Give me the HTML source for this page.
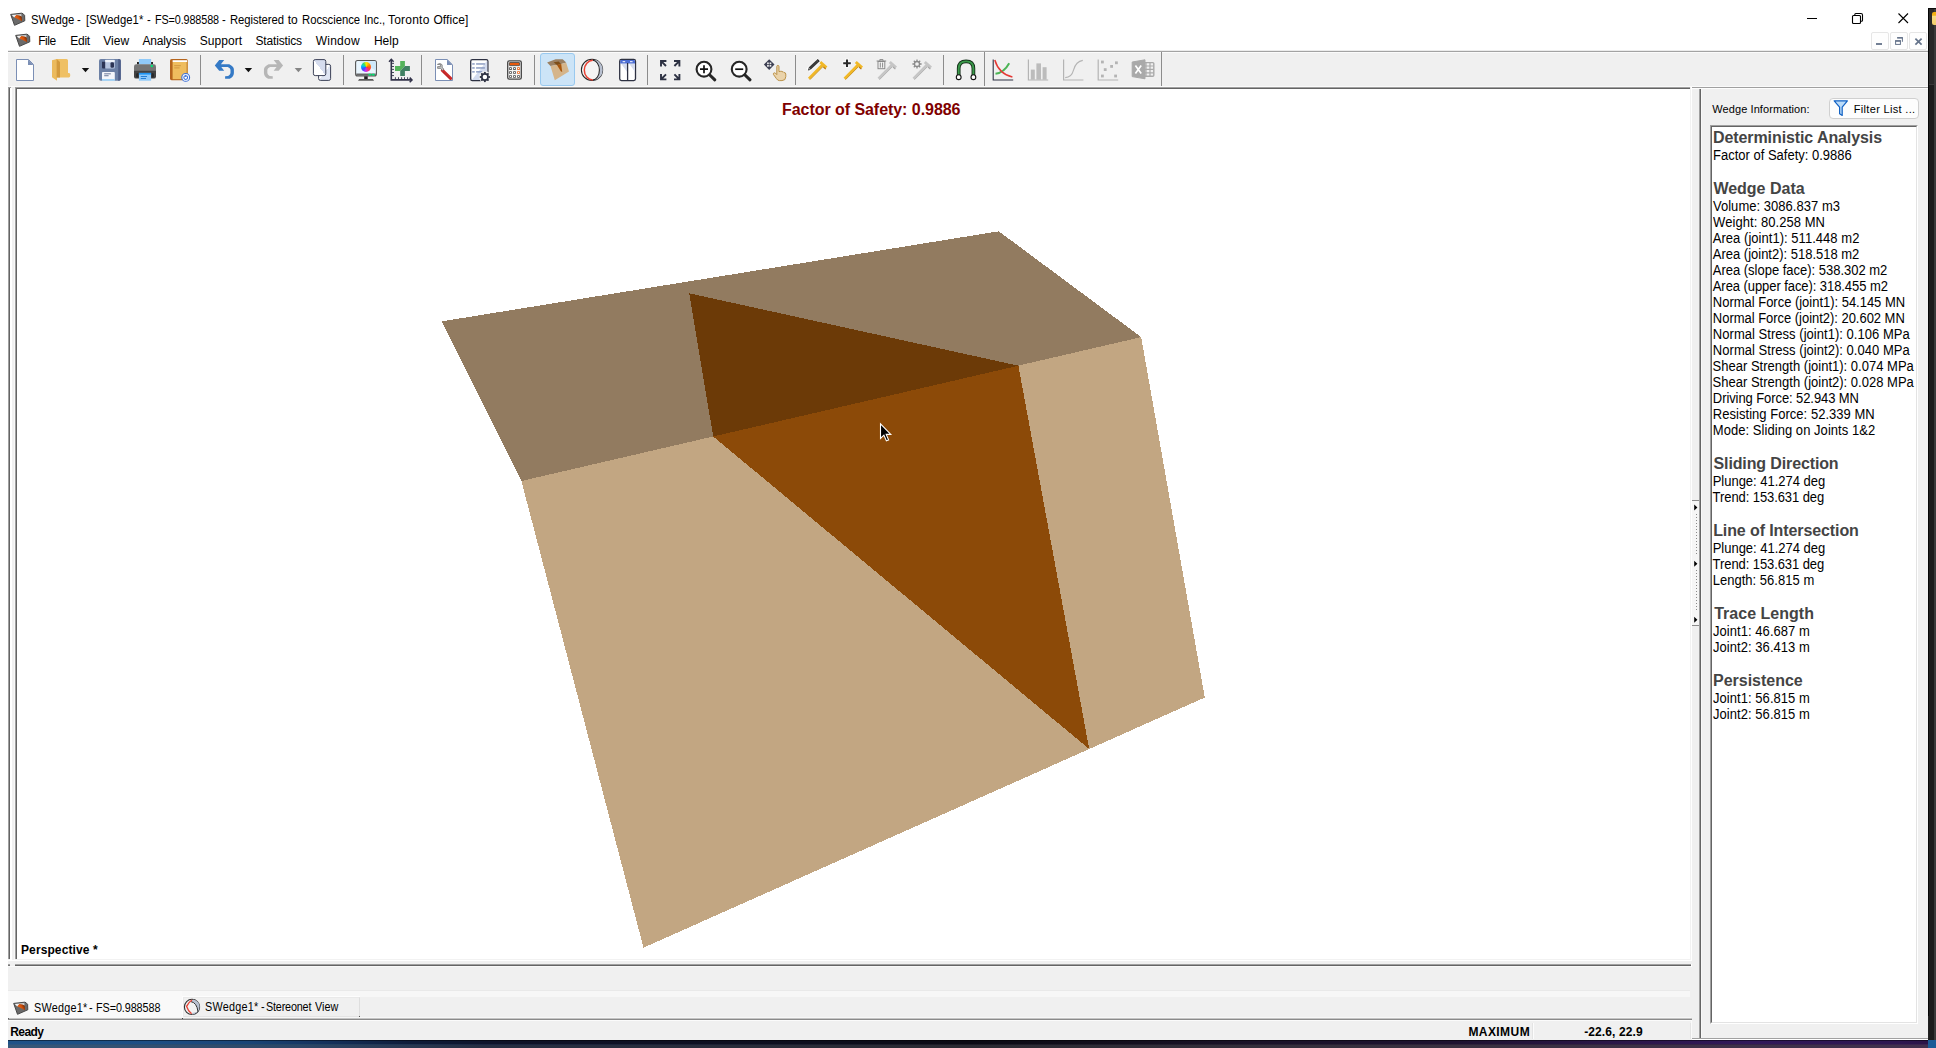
<!DOCTYPE html>
<html>
<head>
<meta charset="utf-8">
<title>SWedge</title>
<style>
*{box-sizing:border-box;margin:0;padding:0}
html,body{width:1936px;height:1048px;overflow:hidden;background:#fff;font-family:"Liberation Sans",sans-serif;}
#root{position:absolute;left:0;top:0;width:1936px;height:1048px;overflow:hidden;background:#fff}
.abs{position:absolute}
.t{position:absolute;white-space:nowrap;color:#000;line-height:1}
#win{position:absolute;left:8px;top:0;width:1920px;height:1040px;background:#f0f0f0}
#titlebar{position:absolute;left:0;top:0;width:1920px;height:50px;background:#fff}
.menu{font-size:12px;top:35px}
.sep{position:absolute;top:54px;width:1px;height:30px;background:#a0a0a0}
.ic{position:absolute;top:58px;width:24px;height:24px;overflow:visible}
svg{overflow:visible}
/* info panel */
#infoo{position:absolute;left:1702px;top:125px;width:208px;height:899px;border:1px solid;border-color:#a0a0a0 #fff #fff #a0a0a0}
#info{position:absolute;left:0;top:0;width:206px;height:897px;background:#fff;border:1px solid;border-color:#646464 #e3e3e3 #e3e3e3 #646464;padding-top:1px}
#info .h{font-weight:bold;font-size:16px;color:#444;height:19px;line-height:19px;white-space:nowrap;padding-left:1px;letter-spacing:-0.12px}
#info .l{font-size:13px;color:#000;height:16px;line-height:16px;white-space:nowrap;padding-left:1px;position:relative;top:1px;transform:scaleY(1.08);transform-origin:0 12.5px}
#info .b{height:16px}
</style>
</head>
<body>
<div id="root">
<svg width="0" height="0" style="position:absolute">
 <defs>
  <linearGradient id="og" x1="0" y1="0.6" x2="1" y2="0.2"><stop offset="0.15" stop-color="#f06010"/><stop offset="0.55" stop-color="#d0500a"/><stop offset="0.9" stop-color="#7a2c02"/></linearGradient>
  <linearGradient id="wg" x1="0" y1="0" x2="1" y2="0"><stop offset="0" stop-color="#ffffff"/><stop offset="1" stop-color="#c8c8c8"/></linearGradient>
  <symbol id="appicon" viewBox="0 0 16 14">
   <path d="M0.7 2.4 L11.6 1.2 Q13 1.1 14.6 3.4 L14.8 8.8 L4.5 13.3 Z" fill="#6a6a6a" stroke="#474747" stroke-width="1" stroke-linejoin="round"/>
   <path d="M1.8 3 L11.3 2 L11.6 4.8 L6.6 3.2 L4.2 5.6 Z" fill="url(#wg)"/>
   <path d="M4.4 5.2 L6.4 3.1 Q9.6 3.2 11.6 4.6 L12.1 9.3 Z" fill="url(#og)"/>
  </symbol>
 </defs>
</svg>
<!-- desktop strips -->
<div class="abs" id="wall" style="left:8px;top:1040px;width:1920px;height:8px;background:linear-gradient(90deg,#1f5288 0px,#1d4e84 142px,#1a4476 242px,#14305a 322px,#0e1c3a 400px,#0e1228 500px,#0c0e1e 792px,#0a0a14 960px,#120e1c 1092px,#1a1228 1242px,#1e1230 1444px,#2a1646 1592px,#32185a 1742px,#2e1650 1892px,#2a1448 1920px)"></div>
<div class="abs" id="wall2" style="left:8px;top:1045px;width:1920px;height:3px;background:linear-gradient(90deg,#37587a 0px,#2c4666 292px,#262e42 476px,#2a2a32 960px,#3a3040 1444px,#42304e 1920px)"></div>
<div class="abs" style="left:8px;top:1044px;width:1920px;height:1px;background:linear-gradient(90deg,#2b5581 0px,#234566 292px,#1a2540 476px,#1a1a24 960px,#2e2238 1444px,#3a2350 1920px)"></div>
<div class="abs" style="left:8px;top:1040px;width:1920px;height:1px;background:rgba(0,0,0,0.45)"></div>
<div class="abs" id="rstrip" style="left:1928px;top:8px;width:8px;height:1032px;background:#1d1d1d"></div>
<div class="abs" style="left:1928px;top:8px;width:8px;height:76px;background:#292929"></div>
<div class="abs" style="left:1928px;top:84px;width:8px;height:1px;background:#3a3a3a"></div>
<div class="abs" style="left:1934px;top:8px;width:2px;height:1032px;background:#3b3b3b"></div>
<div class="abs" style="left:1928px;top:8px;width:1px;height:1008px;background:#050505"></div>
<div class="abs" style="left:1928px;top:1016px;width:1px;height:24px;background:#222"></div>
<div class="abs" style="left:1928px;top:8px;width:8px;height:1px;background:#0a0a0a"></div>
<div class="abs" style="left:1932px;top:12px;width:4px;height:13px;background:linear-gradient(180deg,#f2ae0a 0,#f2b21a 25%,#f7dc86 32%,#f3cf6a 100%);border-radius:2px 0 0 2px"></div>
<div class="abs" style="left:1928px;top:1040px;width:8px;height:8px;background:#1b5b97"></div>

<div id="win">
 <div id="titlebar"></div>
 <svg class="abs" style="left:2px;top:12px" width="16" height="14"><use href="#appicon"/></svg>
 <svg class="abs" style="left:7px;top:33px" width="16" height="14"><use href="#appicon"/></svg>
 <!-- title text -->
 <!-- menu -->
 <!-- window controls -->
 <svg class="abs" style="left:1792px;top:8px" width="120" height="20" viewBox="0 0 120 20">
  <path d="M7 10.5 H17" stroke="#000" stroke-width="1" fill="none"/>
  <path d="M53.5 7.5 h6 q1 0 1 1 v6 q0 1 -1 1 h-6 q-1 0 -1 -1 v-6 q0 -1 1 -1 z M54.8 7.2 v-0.7 q0 -1 1 -1 h5.2 q1.5 0 1.5 1.5 v5.2 q0 1 -1 1 h-0.7" stroke="#000" stroke-width="1.1" fill="none"/>
  <path d="M98.5 5.5 L108 15 M108 5.5 L98.5 15" stroke="#000" stroke-width="1.1" fill="none"/>
 </svg>
 <!-- MDI controls -->
 <div class="abs" style="left:1863px;top:32px;width:18px;height:18px;border:1px solid #e6e6e6;border-radius:2px;background:#fefefe"></div>
 <div class="abs" style="left:1882px;top:32px;width:18px;height:18px;border:1px solid #e6e6e6;border-radius:2px;background:#fefefe"></div>
 <div class="abs" style="left:1901px;top:32px;width:18px;height:18px;border:1px solid #e6e6e6;border-radius:2px;background:#fefefe"></div>
 <svg class="abs" style="left:1863px;top:32px" width="56" height="18" viewBox="1871 32 56 18">
  <rect x="1876" y="43.1" width="6" height="1.8" fill="#64738a"/>
  <path d="M1897.2 37.8 H1902.4 V41.8" stroke="#64738a" stroke-width="1" fill="none"/>
  <rect x="1897.2" y="37.1" width="5.7" height="1.4" fill="#64738a"/>
  <rect x="1895.6" y="40.9" width="4.8" height="3.5" fill="#fff" stroke="#64738a" stroke-width="1"/>
  <rect x="1895.1" y="40.2" width="5.8" height="1.5" fill="#64738a"/>
  <path d="M1915.4 38.6 L1921.6 44.6 M1921.6 38.6 L1915.4 44.6" stroke="#64738a" stroke-width="1.7" fill="none"/>
 </svg>
 <!-- line under menu -->
 <div class="abs" style="left:0;top:50px;width:1920px;height:1px;background:#ececec"></div>
 <div class="abs" style="left:0;top:51px;width:1920px;height:1px;background:#a3a3a3"></div>
 <div class="abs" style="left:0;top:52px;width:1919px;height:1px;background:#fbfbfb"></div>
 <!-- TOOLBAR -->
 <svg class="abs" id="tb" style="left:-8px;top:52px" width="1200" height="35" viewBox="0 52 1200 35">
  <defs>
   <linearGradient id="pg" x1="0" y1="0" x2="1" y2="1"><stop offset="0.5" stop-color="#ffffff"/><stop offset="0.5" stop-color="#dfe5f3"/></linearGradient>
   <linearGradient id="pg2" x1="1" y1="0" x2="0" y2="1"><stop offset="0.5" stop-color="#d5dcee"/><stop offset="0.5" stop-color="#ffffff"/></linearGradient>
   <g id="hammer">
    <path d="M0.9 18.6 L14.6 4.8" stroke="#f1b827" stroke-width="2.7" fill="none"/>
    <path d="M1.9 19.7 L15.2 6.3" stroke="#c98e12" stroke-width="0.9" fill="none"/>
    <path d="M12.2 2.0 L18.4 7.6" stroke="#f1b827" stroke-width="2.9" fill="none"/>
    <path d="M15.4 7.0 L17.8 9.1" stroke="#b97a10" stroke-width="1.2" fill="none"/>
   </g>
   <g id="hammerg">
    <path d="M0.9 18.6 L14.6 4.8" stroke="#c6c6c6" stroke-width="2.7" fill="none"/>
    <path d="M1.9 19.7 L15.2 6.3" stroke="#adadad" stroke-width="0.9" fill="none"/>
    <path d="M12.2 2.0 L18.4 7.6" stroke="#c6c6c6" stroke-width="2.9" fill="none"/>
    <path d="M15.4 7.0 L17.8 9.1" stroke="#a8a8a8" stroke-width="1.2" fill="none"/>
   </g>
   <g id="dd"><path d="M0 0 h7.4 l-3.7 4.2 z"/></g>
   <path id="undoP" d="M214.8 65.5 L219.2 60.1 H224.2 L220.9 64.3 H229.3 Q233.9 66.5 233.9 69.6 V73.3 Q233.6 77 229.7 78.8 H225.1 V76.3 L228.2 76 Q230.5 74.5 230.5 72.9 V69.8 Q230.3 68 227.8 67 H221.3 L224.2 70.8 H219.2 Z"/>
  </defs>
  <!-- 1 new -->
  <path d="M16.5 59.5 H28.5 L33.5 64.5 V80.5 H16.5 Z" fill="#fff" stroke="#7b8fb5" stroke-width="1"/>
  <path d="M28 59.5 V65 H33.5 Z" fill="#7b8fb5"/>
  <!-- 2 open folder -->
  <path d="M52 60.2 L57 59 V80.8 L52 77.2 Z" fill="#ebba5e"/>
  <path d="M56.6 59 H66.5 Q68 59 68 60.5 V73 H69 Q70.2 73 70.2 74.6 V75.8 Q70.2 77.4 68.8 77.4 H56.6 Z" fill="#efc064"/>
  <path d="M56.6 59 L60 62 V77.4 H56.6 Z" fill="#d39a3e"/>
  <use href="#dd" x="81.8" y="68" fill="#111"/>
  <!-- 4 save -->
  <rect x="99" y="59" width="21.8" height="21.8" rx="1.8" fill="#6c80a5"/>
  <path d="M118.2 59 H119 Q120.8 59 120.8 60.8 V79 Q120.8 80.8 119 80.8 H118.2 Z" fill="#4e5e88"/>
  <rect x="105" y="59.8" width="9.8" height="8.8" rx="0.8" fill="#b7c5df"/>
  <rect x="105.2" y="60" width="9.4" height="2.2" fill="#eef2f9"/>
  <path d="M102 61.8 H105.2 V68.4 H103 Q102 68.4 102 67.4 Z" fill="#2c3454"/>
  <rect x="110.5" y="62.3" width="3.5" height="5.4" rx="1.2" fill="#2c3454"/>
  <rect x="102" y="72.1" width="12.8" height="8.7" rx="0.8" fill="#f4f6fb"/>
  <rect x="104.2" y="73.4" width="6.6" height="0.9" fill="#5b6b8f"/>
  <rect x="104.2" y="75.3" width="4.4" height="0.9" fill="#5b6b8f"/>
  <rect x="102" y="79.1" width="12.8" height="1.7" fill="#9cd0f5"/>
  <!-- 5 print -->
  <rect x="138.9" y="59" width="12.2" height="5.4" fill="#90caf9"/>
  <rect x="137" y="62" width="1.9" height="2.4" fill="#222"/><rect x="151.1" y="62" width="1.9" height="2.4" fill="#222"/>
  <path d="M136.2 64.2 H153.8 Q156 64.2 156 66.4 V70.8 H134 V66.4 Q134 64.2 136.2 64.2 Z" fill="#757575"/>
  <path d="M134 70.6 H156 V76.4 Q156 78.6 153.8 78.6 H136.2 Q134 78.6 134 76.4 Z" fill="#424242"/>
  <rect x="136" y="72.9" width="18" height="4.6" rx="1.6" fill="#2a2a2a"/>
  <rect x="138.9" y="72.9" width="12.2" height="7.8" fill="#90caf9"/>
  <rect x="138.9" y="72.9" width="12.2" height="1.7" fill="#2196f3"/>
  <rect x="140.8" y="76.1" width="6.2" height="0.9" fill="#1976d2"/><rect x="140.8" y="78" width="5.2" height="0.9" fill="#1976d2"/>
  <circle cx="151.8" cy="66" r="1.2" fill="#00e676"/>
  <!-- 6 book -->
  <rect x="170" y="59" width="17.8" height="21.2" rx="1.6" fill="#b5651d"/>
  <rect x="172.6" y="60.2" width="14.6" height="1.8" fill="#fff"/>
  <rect x="172.6" y="62" width="15.2" height="17.2" fill="#efbd5e"/>
  <rect x="186.5" y="62" width="1.3" height="17.2" fill="#c98a3a"/><rect x="174.2" y="65.2" width="6.6" height="1" fill="#d19640"/><rect x="174.2" y="67.4" width="5.4" height="1" fill="#d19640"/>
  <circle cx="185.7" cy="77.4" r="3.9" fill="#fff" stroke="#3b6fd6" stroke-width="1.1"/>
  <circle cx="185.7" cy="77.6" r="1.9" fill="none" stroke="#3b6fd6" stroke-width="1.1"/>
  <rect x="185.2" y="74.8" width="1" height="2.2" fill="#3b6fd6"/>
  <rect x="200" y="55" width="1" height="30" fill="#8c8c8c"/>
  <!-- 7 undo -->
  <use href="#undoP" fill="#357ac6"/>
  <use href="#dd" x="244.7" y="68" fill="#111"/>
  <!-- 8 redo -->
  <use href="#undoP" transform="translate(497.85 0) scale(-1 1)" fill="#b6b6b6"/>
  <use href="#dd" x="294.7" y="68" fill="#858585"/>
  <!-- 9 copy -->
  <rect x="318.6" y="64.4" width="12" height="16" rx="1.8" fill="url(#pg)" stroke="#3c4258" stroke-width="1"/>
  <rect x="313.4" y="59.6" width="12.4" height="16" rx="1.8" fill="url(#pg2)" stroke="#3c4258" stroke-width="1"/>
  <rect x="343" y="55" width="1" height="30" fill="#8c8c8c"/>
  <!-- 10 monitor -->
  <rect x="355.6" y="60.5" width="20.8" height="15.4" rx="2" fill="#eaf6fe" stroke="#555" stroke-width="1.1"/>
  <path d="M359 61.2 H374.6 Q375.8 61.2 375.8 62.4 V70.6 Z" fill="#cfe8fa"/>
  <path d="M356.2 73.6 H375.8 V74.2 Q375.8 75.4 374.6 75.4 H357.4 Q356.2 75.4 356.2 74.2 Z" fill="#686868"/>
  <rect x="368.4" y="73.7" width="2.9" height="1.8" rx="0.6" fill="#00e070"/><rect x="371.8" y="73.7" width="2.9" height="1.8" rx="0.6" fill="#00e070"/>
  <rect x="364.2" y="76.3" width="3.5" height="2.9" fill="#1e1e1e"/>
  <path d="M359.2 79.1 H372.9 L374.1 80.7 H358 Z" fill="#5a5a5a"/>
  <!-- 11 axes plus -->
  <path d="M391.3 59.8 V79.9 H411.6" fill="none" stroke="#33334a" stroke-width="1.6"/>
  <path d="M389 61.7 L391.3 59.3 L393.6 61.7 M409.7 77.6 L412 79.9 L409.7 82.2" fill="none" stroke="#33334a" stroke-width="1.5"/>
  <path d="M392 63.4 h2 M392 66.5 h2 M392 69.4 h2 M392 72.5 h2 M392 75.6 h2 M395.4 79.2 v-2 M398.5 79.2 v-2 M401.6 79.2 v-2 M404.5 79.2 v-2 M407.6 79.2 v-2" stroke="#33334a" stroke-width="0.9"/>
  <path d="M400.2 61.1 H404.9 V66.05 L400.2 71 H395 V66.05 H400.2 Z" fill="#53b35a"/>
  <path d="M404.9 66.05 H409.9 V71 H404.9 V76 H400.2 V71 Z" fill="#3f8062"/>
  <rect x="421" y="55" width="1" height="30" fill="#8c8c8c"/>
  <!-- 12 wrench doc -->
  <path d="M435.5 59.5 H447.2 L452.5 64.8 V80.5 H435.5 Z" fill="#fff" stroke="#7b8fb5" stroke-width="1"/>
  <path d="M447 59.5 V65 H452.5 Z" fill="#7b8fb5"/>
  <path d="M442.4 70.4 L450.6 78.4" stroke="#cc2a2a" stroke-width="3.2" stroke-linecap="round" fill="none"/>
  <path d="M443.4 72.4 L449.8 78.6" stroke="#9c1c1c" stroke-width="0.9" stroke-dasharray="0.8 0.8" fill="none"/>
  <path d="M437.4 64.4 H440.4 V66.6 H437.6 V68.4 H440.6 L442.4 70.6 L443.8 69.2 L442.2 67.2 V65.2 Q441.8 63.6 439.6 63.6 Z" fill="#c4c4c4" stroke="#6a6a6a" stroke-width="0.7"/>
  <!-- 13 doc gear -->
  <rect x="470.7" y="59.6" width="17.2" height="21" rx="1.6" fill="#fff" stroke="#2d3142" stroke-width="1.3"/>
  <path d="M487.2 60.4 V79.9 H471.8 Z" fill="#d3dbee"/>
  <g fill="#8d9dc2"><rect x="472.2" y="63.2" width="2.5" height="1.5"/><rect x="476.1" y="63.2" width="8.8" height="1.5"/><rect x="472.2" y="67.2" width="2.5" height="1.5"/><rect x="476.1" y="67.2" width="8.8" height="1.5"/><rect x="472.2" y="71.1" width="2.5" height="1.5"/><rect x="476.1" y="71.1" width="6.2" height="1.5"/></g>
  <circle cx="484.9" cy="77" r="5.9" fill="#f0f0f0"/>
  <g fill="#2d3142"><circle cx="489.15" cy="77.00" r="1.0"/><circle cx="487.91" cy="80.01" r="1.0"/><circle cx="484.90" cy="81.25" r="1.0"/><circle cx="481.89" cy="80.01" r="1.0"/><circle cx="480.65" cy="77.00" r="1.0"/><circle cx="481.89" cy="73.99" r="1.0"/><circle cx="484.90" cy="72.75" r="1.0"/><circle cx="487.91" cy="73.99" r="1.0"/></g>
  <circle cx="484.9" cy="77" r="3.1" fill="#fff" stroke="#2d3142" stroke-width="1.7"/>
  <!-- 14 calculator -->
  <rect x="507.7" y="60.8" width="13.6" height="18.4" rx="1.6" fill="#f4f4f4" stroke="#444" stroke-width="1.3"/>
  <rect x="509.4" y="62.5" width="10.2" height="3.1" rx="0.5" fill="#e8590c" stroke="#444" stroke-width="0.8"/>
  <rect x="509.2" y="67.3" width="2.6" height="2.6" rx="0.4" fill="#444"/><rect x="509.95" y="68.05" width="1.1" height="1.1" fill="#fff"/><rect x="513.2" y="67.3" width="2.6" height="2.6" rx="0.4" fill="#444"/><rect x="513.95" y="68.05" width="1.1" height="1.1" fill="#fff"/><rect x="517.2" y="67.3" width="2.6" height="2.6" rx="0.4" fill="#e8590c"/><rect x="517.95" y="68.05" width="1.1" height="1.1" fill="#fff"/><rect x="509.2" y="71.2" width="2.6" height="2.6" rx="0.4" fill="#444"/><rect x="509.95" y="71.95" width="1.1" height="1.1" fill="#fff"/><rect x="513.2" y="71.2" width="2.6" height="2.6" rx="0.4" fill="#444"/><rect x="513.95" y="71.95" width="1.1" height="1.1" fill="#fff"/><rect x="517.2" y="71.2" width="2.6" height="2.6" rx="0.4" fill="#e8590c"/><rect x="517.95" y="71.95" width="1.1" height="1.1" fill="#fff"/><rect x="509.2" y="75.2" width="2.6" height="2.6" rx="0.4" fill="#444"/><rect x="509.95" y="75.95" width="1.1" height="1.1" fill="#fff"/><rect x="513.2" y="75.2" width="2.6" height="2.6" rx="0.4" fill="#444"/><rect x="513.95" y="75.95" width="1.1" height="1.1" fill="#fff"/><rect x="517.2" y="75.2" width="2.6" height="2.6" rx="0.4" fill="#444"/><rect x="517.95" y="75.95" width="1.1" height="1.1" fill="#fff"/>
  <rect x="534" y="55" width="1" height="30" fill="#8c8c8c"/>
  <!-- 15 wedge selected -->
  <rect x="540.5" y="53.5" width="34" height="32" rx="2.5" fill="#cce4f7" stroke="#99c9ef" stroke-width="1"/>
  <path d="M547.1 62.5 L555.6 59.2 L562.7 59.2 L566.2 62.6 L559.9 64.4 L550.5 66 Z" fill="#9b8062"/>
  <path d="M550.5 65.9 L559.9 64.2 L566.2 62.8 L569 71.6 L554.8 80.2 Z" fill="#d5b58b"/>
  <path d="M553.6 62.2 L558.7 61.6 L561.2 64.2 L557 64.9 Z" fill="#7d4d18"/>
  <path d="M557 64.9 L561.2 64.1 L562.2 72 L560.8 71.2 Z" fill="#a8560c"/>
  <!-- 16 stereonet -->
  <circle cx="592" cy="69.9" r="10.6" fill="#f4f4f4" stroke="#262626" stroke-width="1.05"/>
  <path d="M592.8 60.3 A6.6 9.8 0 0 1 592.8 79.9 L594.6 80.2 A10.6 10.6 0 0 0 595.4 59.8 Z" fill="#b8c0d0"/>
  <path d="M592.8 60.3 A6.6 9.8 0 0 1 592.8 79.9" fill="none" stroke="#262626" stroke-width="1.05"/>
  <path d="M592.8 60.3 A8.5 9.8 0 0 0 592.8 79.9" fill="none" stroke="#e94335" stroke-width="1.5"/>
  <!-- 17 columns -->
  <rect x="619.7" y="59.4" width="15.8" height="21.2" rx="1.8" fill="#fff" stroke="#2d3142" stroke-width="1.3"/>
  <path d="M621 63.4 H627 V71.8 Z M629 63.4 H635 V71.8 Z" fill="#d5dcee"/>
  <path d="M620.2 63.4 V61.4 Q620.2 60.1 621.5 60.1 H633.7 Q635 60.1 635 61.4 V63.4 Z" fill="#4a6cd4"/>
  <rect x="622.6" y="61.2" width="2.6" height="1" fill="#fff"/><rect x="630" y="61.2" width="2.6" height="1" fill="#fff"/>
  <path d="M627.6 63 V80.4" stroke="#2d3142" stroke-width="1.3"/>
  <rect x="647" y="55" width="1" height="30" fill="#8c8c8c"/>
  <!-- 18 fullscreen -->
  <g fill="none" stroke="#2d3142" stroke-width="1.9">
   <path d="M661 66.4 V61 H666.4 M661.4 61.4 L666 66"/>
   <path d="M679.4 66.4 V61 H674 M679 61.4 L674.4 66"/>
   <path d="M661 74 V79.4 H666.4 M661.4 79 L666 74.4"/>
   <path d="M679.4 74 V79.4 H674 M679 79 L674.4 74.4"/>
  </g>
  <!-- 19 zoom in -->
  <circle cx="704" cy="69.2" r="7.4" fill="#fff" stroke="#262626" stroke-width="2.1"/>
  <path d="M700 69.2 H708 M704 65.2 V73.2" stroke="#111" stroke-width="1.7"/>
  <path d="M709.8 75 L714.8 79.8" stroke="#262626" stroke-width="3.1" stroke-linecap="round"/>
  <!-- 20 zoom out -->
  <circle cx="739.2" cy="69.2" r="7.4" fill="#fff" stroke="#262626" stroke-width="2.1"/>
  <path d="M735.2 69.2 H743.2" stroke="#111" stroke-width="1.7"/>
  <path d="M745 75 L750 79.8" stroke="#262626" stroke-width="3.1" stroke-linecap="round"/>
  <!-- 21 pan -->
  <path d="M769.2 59.2 L774.5 64.6 L769.2 70 L763.9 64.6 Z" fill="#3c3f52"/>
  <g fill="#f0f0f0"><rect x="767.1" y="62.5" width="1.7" height="1.7"/><rect x="769.6" y="62.5" width="1.7" height="1.7"/><rect x="767.1" y="65" width="1.7" height="1.7"/><rect x="769.6" y="65" width="1.7" height="1.7"/></g>
  <path d="M776.8 66.6 Q776.8 65.4 777.9 65.4 Q779 65.4 779 66.6 V71.6 L780.2 71.4 Q781.2 70.6 782 71.8 Q783.2 71.2 784 72.6 Q785.6 72.4 785.8 74 V76.6 Q785.8 80.6 782 80.6 H779.4 Q777.6 80.6 776.4 78.6 L773.4 74.4 Q773 73 774.4 72.8 Q775.4 72.8 776.8 74.6 Z" fill="#ead3aa" stroke="#b58a3c" stroke-width="0.9"/>
  <rect x="795" y="55" width="1" height="30" fill="#8c8c8c"/>
  <!-- 22-25 hammers -->
  <use href="#hammer" x="808" y="60"/>
  <path d="M808 70.2 L819 60" stroke="#fff" stroke-width="4.6" fill="none"/>
  <path d="M809.6 68.6 L817.6 61.2" stroke="#3a3a3a" stroke-width="3" fill="none"/>
  <path d="M808.0 70.4 L808.4 68.0 L810.4 70.0 Z" fill="#3a3a3a"/>

  <path d="M817.6 61.2 L818.8 60.2" stroke="#222" stroke-width="3" fill="none"/>
  <use href="#hammer" x="843.6" y="60"/>
  <path d="M842.6 63.2 H851.4 M847 58.8 V67.6" stroke="#fff" stroke-width="4"/>
  <path d="M843.2 63.2 H850.8 M847 59.4 V67" stroke="#2a2a2a" stroke-width="2.1"/>
  <use href="#hammerg" x="877.6" y="60"/>
  <rect x="876.6" y="59" width="9.6" height="10.4" fill="#f0f0f0"/>
  <g stroke="#8a8a8a" stroke-width="1" fill="none"><path d="M876.6 61 H886.2 M879.8 60.8 V59.6 H883 V60.8"/><rect x="878" y="61.5" width="6.8" height="7.2" fill="#f4f4f4"/><path d="M880.3 62.6 V67.6 M882.6 62.6 V67.6"/></g>
  <use href="#hammerg" x="912.6" y="60"/>
  <circle cx="917" cy="64" r="2.5" fill="#f0f0f0" stroke="#8a8a8a" stroke-width="1.3"/>
  <g stroke="#8a8a8a" stroke-width="1.3"><path d="M917 59.4 v1.8 M917 66.8 v1.8 M912.4 64 h1.8 M919.8 64 h1.8 M913.8 60.8 l1.2 1.2 M919 66 l1.2 1.2 M920.2 60.8 l-1.2 1.2 M915 66 l-1.2 1.2"/></g>
  <rect x="943" y="55" width="1" height="30" fill="#8c8c8c"/>
  <!-- 26 magnet -->
  <path d="M958.7 75 V68.6 Q958.7 61.4 966.1 61.4 Q973.4 61.4 973.4 68.6 V75" fill="none" stroke="#16301a" stroke-width="3.7"/>
  <path d="M958.7 75 V68.6 Q958.7 61.4 966.1 61.4 Q973.4 61.4 973.4 68.6 V75" fill="none" stroke="#3a9a4a" stroke-width="1.9"/>
  <circle cx="958.7" cy="77.2" r="2.4" fill="#fff" stroke="#111" stroke-width="1.1"/>
  <circle cx="973.4" cy="77.2" r="2.4" fill="#fff" stroke="#111" stroke-width="1.1"/>
  <rect x="984" y="52" width="1" height="35" fill="#8c8c8c"/>
  <!-- 27 chart -->
  <path d="M995.5 73.8 Q1004 72.6 1009.2 63.2" fill="none" stroke="#4cb455" stroke-width="2"/>
  <path d="M994.8 60 Q999 74 1012.4 77" fill="none" stroke="#e53935" stroke-width="1.5"/>
  <path d="M993.2 59.6 V80 H1013.2" fill="none" stroke="#2d3142" stroke-width="1.1"/>
  <!-- 28 bars -->
  <g fill="#bcbcbc"><rect x="1030.8" y="69.6" width="4" height="10"/><rect x="1036.4" y="63.4" width="4.6" height="16.2"/><rect x="1042.6" y="67.2" width="4" height="12.4"/></g>
  <path d="M1028.4 59.6 V80 H1048.2" fill="none" stroke="#b4b4b4" stroke-width="1.2"/>
  <!-- 29 curve -->
  <path d="M1065.2 77.6 Q1071.6 77.4 1073.6 69.8 Q1076 61.4 1082.8 60.4" fill="none" stroke="#b4b4b4" stroke-width="1.1"/>
  <path d="M1063.6 59.6 V80 H1083.4" fill="none" stroke="#b4b4b4" stroke-width="1.2"/>
  <!-- 30 scatter -->
  <g fill="#b4b4b4"><rect x="1101" y="60.6" width="2.8" height="2.8"/><rect x="1115" y="61.4" width="2.8" height="2.8"/><rect x="1110.2" y="65" width="2.8" height="2.8"/><rect x="1103.8" y="68.2" width="2.8" height="2.8"/><rect x="1101" y="74.6" width="2.8" height="2.8"/><rect x="1114.2" y="74.6" width="2.8" height="2.8"/></g>
  <path d="M1098.2 59.6 V80 H1118.2" fill="none" stroke="#b4b4b4" stroke-width="1.2"/>
  <!-- 31 excel -->
  <rect x="1142" y="62.6" width="11.8" height="13.6" rx="1" fill="#f0f0f0" stroke="#aaaaaa" stroke-width="1.4"/>
  <path d="M1146 62.6 V76 M1150 62.6 V76 M1142 66 H1153.6 M1142 69.4 H1153.6 M1142 72.8 H1153.6" stroke="#aaaaaa" stroke-width="1.2"/>
  <path d="M1132.2 62 L1145 59.8 V78.8 L1132.2 76.6 Z" fill="#a9a9a9" stroke="#a9a9a9" stroke-width="1" stroke-linejoin="round"/>
  <path d="M1135.4 65.4 L1141.2 73.4 M1141.2 65.4 L1135.4 73.4" stroke="#fff" stroke-width="1.7"/>
  <rect x="1161" y="52" width="1" height="35" fill="#8c8c8c"/>
 </svg>
 <div class="abs" id="wheel" style="left:352.7px;top:61.9px;width:10.4px;height:10.4px;border-radius:50%;background:conic-gradient(from 0deg,#ffee00,#ffb300 40deg,#ff7a00 70deg,#ff3b30 110deg,#f0308c 150deg,#c030f0 185deg,#6a3cff 215deg,#2962ff 245deg,#00a8ff 275deg,#10d8c0 300deg,#3fd860 325deg,#a8e62e 348deg,#ffee00 360deg)"></div>
 <!-- edges around toolbar/viewport (win coords = page-8) -->
 <div class="abs" style="left:0;top:86px;width:1920px;height:1px;background:#fafafa"></div>
 <!-- y=87 -->
 <div class="abs" style="left:0;top:87px;width:3px;height:1px;background:#a0a0a0"></div>
 <div class="abs" style="left:7px;top:87px;width:1675px;height:1px;background:#a0a0a0"></div>
 <div class="abs" style="left:1684px;top:87px;width:236px;height:1px;background:#a0a0a0"></div>
 <div class="abs" style="left:1684px;top:88px;width:236px;height:1px;background:#fdfdfd"></div>
 <!-- left double lines -->
 <div class="abs" style="left:0;top:88px;width:1px;height:871px;background:#a0a0a0"></div>
 <div class="abs" style="left:1px;top:88px;width:1px;height:871px;background:#646464"></div>
 <div class="abs" style="left:2px;top:88px;width:2px;height:873px;background:#fff"></div>
 <div class="abs" style="left:6px;top:88px;width:1px;height:873px;background:#f8f8f8"></div>
 <div class="abs" style="left:7px;top:88px;width:1px;height:871px;background:#a0a0a0"></div>
 <div class="abs" style="left:8px;top:88px;width:1px;height:871px;background:#646464"></div>
 <!-- viewport white -->
 <div class="abs" id="vp" style="left:9px;top:89px;width:1673px;height:870px;background:#fff"></div>
 <div class="abs" style="left:8px;top:88px;width:1674px;height:1px;background:#646464"></div>
 <div class="abs" style="left:9px;top:959px;width:1674px;height:1px;background:#f2f2f2"></div>
 <div class="abs" style="left:0px;top:960px;width:1684px;height:1px;background:#fff"></div>
 <div class="abs" style="left:1682px;top:88px;width:1px;height:872px;background:#f2f2f2"></div>
 <div class="abs" style="left:1683px;top:87px;width:1px;height:874px;background:#fff"></div>
 <!-- lower frame top edge -->
 <div class="abs" style="left:0;top:964px;width:2px;height:1px;background:#a0a0a0"></div>
 <div class="abs" style="left:0;top:965px;width:2px;height:1px;background:#777"></div>
 <div class="abs" style="left:7px;top:964px;width:1676px;height:1px;background:#a0a0a0"></div>
 <div class="abs" style="left:7px;top:965px;width:1676px;height:1px;background:#646464"></div>
 <div class="abs" style="left:0;top:966px;width:1684px;height:1px;background:#f9f9f9"></div>
 <div class="abs" style="left:1683px;top:964px;width:1px;height:3px;background:#fff"></div>

 <!-- 3D model (page coords) -->
 <svg class="abs" style="left:-8px;top:0" width="1700" height="1000" viewBox="0 0 1700 1000" shape-rendering="crispEdges">
  <polygon points="441.5,321.4 998.8,231.3 1141.2,337.1 521.4,481" fill="#927b60"/>
  <polygon points="521.4,481 1141.2,337.1 1204.8,697.5 643.5,947.7" fill="#c2a682"/>
  <polygon points="689.2,293.3 1018.4,365.7 713.2,436.5" fill="#6c3a07"/>
  <polygon points="713.2,436.5 1018.4,365.7 1089.2,749" fill="#8c4a08"/>
 </svg>
 <div class="t" id="fos" style="left:774px;top:102px;font-size:16px;font-weight:bold;color:#800000;letter-spacing:-0.05px">Factor of Safety: 0.9886</div>
 <div class="t" id="persp" style="left:13px;top:944px;font-size:12px;font-weight:bold;letter-spacing:0.1px">Perspective *</div>
 <!-- mouse cursor -->
 <svg class="abs" style="left:871px;top:422px" width="14" height="22" viewBox="0 0 14 22">
  <path d="M1.5 1.8 V16.4 L4.9 13.2 L7.4 18.9 L9.6 18 L7.2 12.4 H11.8 Z" fill="#000" stroke="#fff" stroke-width="1.1" stroke-linejoin="miter"/>
 </svg>
 <!-- splitter + right panel -->
 <div class="abs" style="left:1691px;top:89px;width:1px;height:950px;background:#a0a0a0"></div>
 <div class="abs" style="left:1692px;top:89px;width:1px;height:950px;background:#646464"></div>
 <div class="abs" style="left:1693px;top:89px;width:1px;height:950px;background:#f8f8f8"></div>
 <!-- collapse button -->
 <div class="abs" style="left:1684px;top:501px;width:7px;height:124px;background:#f6f6f6"></div>
 <div class="abs" style="left:1684px;top:500px;width:7px;height:1px;background:#8c8c8c"></div>
 <div class="abs" style="left:1684px;top:625px;width:7px;height:1px;background:#8c8c8c"></div>
 <svg class="abs" style="left:1684px;top:500px" width="8" height="126" viewBox="0 0 8 126">
  <path d="M2.2 4.6 L5.4 7.6 L2.2 10.6 Z M2.2 60.8 L5.4 63.8 L2.2 66.8 Z M2.2 116.8 L5.4 119.8 L2.2 122.8 Z" fill="#000"/>
  <path d="M4.5 14 V56 M4.5 70 V112" stroke="#8a8a8a" stroke-width="1" stroke-dasharray="1 2"/>
 </svg>
 <div class="abs" id="flbtn" style="left:1821px;top:98px;width:90px;height:21px;border:1px solid #d0d0d0;border-radius:4px;background:#fdfdfd"></div>
 <svg class="abs" style="left:1825px;top:100px" width="16" height="17" viewBox="0 0 16 17">
  <path d="M1.2 0.8 H14.4 L9.2 7.2 V15.4 L6.6 13.8 V7.2 Z" fill="#bcdcf9" stroke="#1262c4" stroke-width="1.2" stroke-linejoin="round"/>
 </svg>
 <div id="infoo"><div id="info">
  <div class="h" style="padding-left:1.05px;letter-spacing:-0.096px">Deterministic Analysis</div>
  <div class="l" style="padding-left:0.96px;letter-spacing:0.004px">Factor of Safety: 0.9886</div>
  <div class="b"></div>
  <div class="h" style="padding-left:1.39px;letter-spacing:-0.003px">Wedge Data</div>
  <div class="l" style="padding-left:0.95px;letter-spacing:0.035px">Volume: 3086.837 m3</div>
  <div class="l" style="padding-left:1.10px;letter-spacing:0.052px">Weight: 80.258 MN</div>
  <div class="l" style="padding-left:0.77px;letter-spacing:0.037px">Area (joint1): 511.448 m2</div>
  <div class="l" style="padding-left:0.77px;letter-spacing:-0.005px">Area (joint2): 518.518 m2</div>
  <div class="l" style="padding-left:0.77px;letter-spacing:-0.011px">Area (slope face): 538.302 m2</div>
  <div class="l" style="padding-left:0.77px;letter-spacing:-0.069px">Area (upper face): 318.455 m2</div>
  <div class="l" style="padding-left:0.86px;letter-spacing:-0.021px">Normal Force (joint1): 54.145 MN</div>
  <div class="l" style="padding-left:0.86px;letter-spacing:-0.031px">Normal Force (joint2): 20.602 MN</div>
  <div class="l" style="padding-left:0.86px;letter-spacing:0.034px">Normal Stress (joint1): 0.106 MPa</div>
  <div class="l" style="padding-left:0.86px;letter-spacing:0.034px">Normal Stress (joint2): 0.040 MPa</div>
  <div class="l" style="padding-left:0.54px;letter-spacing:0.013px">Shear Strength (joint1): 0.074 MPa</div>
  <div class="l" style="padding-left:0.54px;letter-spacing:0.013px">Shear Strength (joint2): 0.028 MPa</div>
  <div class="l" style="padding-left:0.86px;letter-spacing:-0.087px">Driving Force: 52.943 MN</div>
  <div class="l" style="padding-left:0.86px;letter-spacing:0.029px">Resisting Force: 52.339 MN</div>
  <div class="l" style="padding-left:0.86px;letter-spacing:0.045px">Mode: Sliding on Joints 1&amp;2</div>
  <div class="b"></div>
  <div class="h" style="padding-left:1.53px;letter-spacing:-0.126px">Sliding Direction</div>
  <div class="l" style="padding-left:0.66px;letter-spacing:-0.010px">Plunge: 41.274 deg</div>
  <div class="l" style="padding-left:0.61px;letter-spacing:-0.083px">Trend: 153.631 deg</div>
  <div class="b"></div>
  <div class="h" style="padding-left:1.15px;letter-spacing:-0.097px">Line of Intersection</div>
  <div class="l" style="padding-left:0.66px;letter-spacing:-0.010px">Plunge: 41.274 deg</div>
  <div class="l" style="padding-left:0.61px;letter-spacing:-0.083px">Trend: 153.631 deg</div>
  <div class="l" style="padding-left:0.66px;letter-spacing:0.027px">Length: 56.815 m</div>
  <div class="b"></div>
  <div class="h" style="padding-left:2.13px;letter-spacing:0.026px">Trace Length</div>
  <div class="l" style="padding-left:-0.03px;letter-spacing:0.052px">Joint1: 46.687 m</div>
  <div class="l" style="padding-left:-0.03px;letter-spacing:0.052px">Joint2: 36.413 m</div>
  <div class="b"></div>
  <div class="h" style="padding-left:1.05px;letter-spacing:-0.019px">Persistence</div>
  <div class="l" style="padding-left:-0.03px;letter-spacing:0.052px">Joint1: 56.815 m</div>
  <div class="l" style="padding-left:-0.03px;letter-spacing:0.052px">Joint2: 56.815 m</div>
 </div></div>
 <div class="abs" style="left:1684px;top:1038px;width:236px;height:1px;background:#a0a0a0"></div>
 <div class="abs" style="left:1684px;top:1039px;width:236px;height:1px;background:#fff"></div>
 <!-- tab bar -->
 <div class="abs" style="left:0;top:990px;width:1682px;height:1px;background:#e9e9e9"></div>
 <div class="abs" style="left:0;top:991px;width:1682px;height:6px;background:#f7f7f7"></div>
 <div class="abs" style="left:0;top:991px;width:174px;height:27px;background:#f9f9f9"></div>
 <div class="abs" style="left:0;top:1018px;width:1684px;height:1px;background:#c4c4c4"></div>
 <div class="abs" style="left:0;top:1019px;width:1684px;height:1px;background:#8a8a8a"></div>
 <div class="abs" style="left:0;top:1020px;width:1684px;height:1px;background:#fbfbfb"></div>
 <!-- tab 2 -->
 <div class="abs" style="left:174px;top:996px;width:178px;height:1px;background:#fdfdfd"></div>
 <div class="abs" style="left:174px;top:996px;width:1px;height:22px;background:#fdfdfd"></div>
 <div class="abs" style="left:175px;top:997px;width:177px;height:20px;background:#f0f0f0;border-top:1px solid #e9e9e9;border-left:1px solid #e9e9e9;border-right:1px solid #dedede;border-bottom:1px solid #e4e4e4"></div>
 <div class="abs" style="left:175px;top:1017px;width:1508px;height:1px;background:#f7f7f7"></div>
 <div class="abs" style="left:351px;top:1016px;width:1px;height:1px;background:#555"></div>
 <div class="abs" style="left:174px;top:1018px;width:1px;height:1px;background:#444"></div>
 <div class="abs" style="left:0px;top:1018px;width:1px;height:1px;background:#666"></div>
 <svg class="abs" style="left:5px;top:1001px" width="16" height="14"><use href="#appicon"/></svg>
 <svg class="abs" style="left:175px;top:998px" width="18" height="18" viewBox="183 998 18 18">
  <circle cx="192" cy="1006.9" r="7.6" fill="#f2f2f2" stroke="#333" stroke-width="1.1"/>
  <path d="M190.9 1001.6 Q196.8 1002.6 198 1011.4 L196.6 1013 Q199.8 1010 199.6 1006.6 Q199.2 1000.6 193.4 999.4 Z" fill="#b8c0d0"/>
  <path d="M197.6 1011.8 Q194.2 1014.6 191.8 1014.4 L192.4 1013 Z" fill="#b8c0d0"/>
  <path d="M190.9 1001.6 Q196.8 1002.6 198 1011.6" fill="none" stroke="#333" stroke-width="1"/>
  <path d="M192 1000 Q188.8 1002 186.6 1006.4 Q188 1011 191.6 1013.8" fill="none" stroke="#e94335" stroke-width="1.4"/>
 </svg>
 <!-- status bar -->
 <div class="abs" style="left:1524px;top:1023px;width:1px;height:16px;background:#e4e4e4"></div>
 <div class="abs" style="left:1525px;top:1023px;width:1px;height:16px;background:#fcfcfc"></div>
 <div class="abs" style="left:1683px;top:1021px;width:1px;height:18px;background:#fafafa"></div>
 <div class="abs" style="left:1682px;top:1023px;width:1px;height:16px;background:#e4e4e4"></div>
 <div class="t" style="left:22.61px;top:14px;font-size:12px;letter-spacing:0.051px;transform-origin:0 0;transform:scaleX(0.94)">SWedge</div>
 <div class="t" style="left:69.45px;top:14px;font-size:12px;letter-spacing:0.000px;transform-origin:0 0;transform:scaleX(0.94)">-</div>
 <div class="t" style="left:77.63px;top:14px;font-size:12px;letter-spacing:0.060px;transform-origin:0 0;transform:scaleX(0.94)">[SWedge1*</div>
 <div class="t" style="left:138.85px;top:14px;font-size:12px;letter-spacing:0.000px;transform-origin:0 0;transform:scaleX(0.94)">-</div>
 <div class="t" style="left:146.61px;top:14px;font-size:12px;letter-spacing:-0.124px;transform-origin:0 0;transform:scaleX(0.9)">FS=0.988588</div>
 <div class="t" style="left:214.45px;top:14px;font-size:12px;letter-spacing:0.000px;transform-origin:0 0;transform:scaleX(0.94)">-</div>
 <div class="t" style="left:222.15px;top:14px;font-size:12px;letter-spacing:-0.075px;transform-origin:0 0;transform:scaleX(0.94)">Registered</div>
 <div class="t" style="left:279.80px;top:14px;font-size:12px;letter-spacing:-0.101px">to</div>
 <div class="t" style="left:294.05px;top:14px;font-size:12px;letter-spacing:-0.022px;transform-origin:0 0;transform:scaleX(0.94)">Rocscience</div>
 <div class="t" style="left:355.57px;top:14px;font-size:12px;letter-spacing:-0.018px;transform-origin:0 0;transform:scaleX(0.94)">Inc.,</div>
 <div class="t" style="left:380.02px;top:14px;font-size:12px;letter-spacing:0.213px">Toronto</div>
 <div class="t" style="left:425.47px;top:14px;font-size:12px;letter-spacing:0.063px">Office]</div>
 <div class="t" style="left:30.14px;top:35px;font-size:12px;letter-spacing:-0.398px">File</div>
 <div class="t" style="left:62.14px;top:35px;font-size:12px;letter-spacing:-0.213px">Edit</div>
 <div class="t" style="left:95.29px;top:35px;font-size:12px;letter-spacing:0.018px">View</div>
 <div class="t" style="left:134.50px;top:35px;font-size:12px;letter-spacing:-0.178px">Analysis</div>
 <div class="t" style="left:191.68px;top:35px;font-size:12px;letter-spacing:0.080px">Support</div>
 <div class="t" style="left:247.38px;top:35px;font-size:12px;letter-spacing:-0.147px">Statistics</div>
 <div class="t" style="left:307.65px;top:35px;font-size:12px;letter-spacing:0.268px">Window</div>
 <div class="t" style="left:365.94px;top:35px;font-size:12px;letter-spacing:-0.000px">Help</div>
 <div class="t" style="left:1704.32px;top:104px;font-size:11px;letter-spacing:0.084px">Wedge Information:</div>
 <div class="t" style="left:1845.75px;top:104px;font-size:11px;letter-spacing:0.320px">Filter List ...</div>
 <div class="t" style="left:26.34px;top:1002px;font-size:12px;letter-spacing:0.291px;transform-origin:0 0;transform:scaleX(0.9)">SWedge1*</div>
 <div class="t" style="left:81.25px;top:1002px;font-size:12px;letter-spacing:0.000px;transform-origin:0 0;transform:scaleX(0.9)">-</div>
 <div class="t" style="left:87.81px;top:1002px;font-size:12px;letter-spacing:-0.081px;transform-origin:0 0;transform:scaleX(0.9)">FS=0.988588</div>
 <div class="t" style="left:197.19px;top:1001px;font-size:12px;letter-spacing:0.294px;transform-origin:0 0;transform:scaleX(0.9)">SWedge1*</div>
 <div class="t" style="left:252.55px;top:1001px;font-size:12px;letter-spacing:0.000px;transform-origin:0 0;transform:scaleX(0.9)">-</div>
 <div class="t" style="left:258.34px;top:1001px;font-size:12px;letter-spacing:-0.201px;transform-origin:0 0;transform:scaleX(0.9)">Stereonet</div>
 <div class="t" style="left:307.14px;top:1001px;font-size:12px;letter-spacing:-0.007px;transform-origin:0 0;transform:scaleX(0.9)">View</div>
 <div class="t" style="left:2.29px;top:1026px;font-size:12px;letter-spacing:-0.583px;font-weight:bold">Ready</div>
 <div class="t" style="left:1460.39px;top:1026px;font-size:12px;letter-spacing:0.432px;font-weight:bold">MAXIMUM</div>
 <div class="t" style="left:1576.15px;top:1026px;font-size:12px;letter-spacing:0.121px;font-weight:bold">-22.6, 22.9</div>
</div>
</div>
</body>
</html>
